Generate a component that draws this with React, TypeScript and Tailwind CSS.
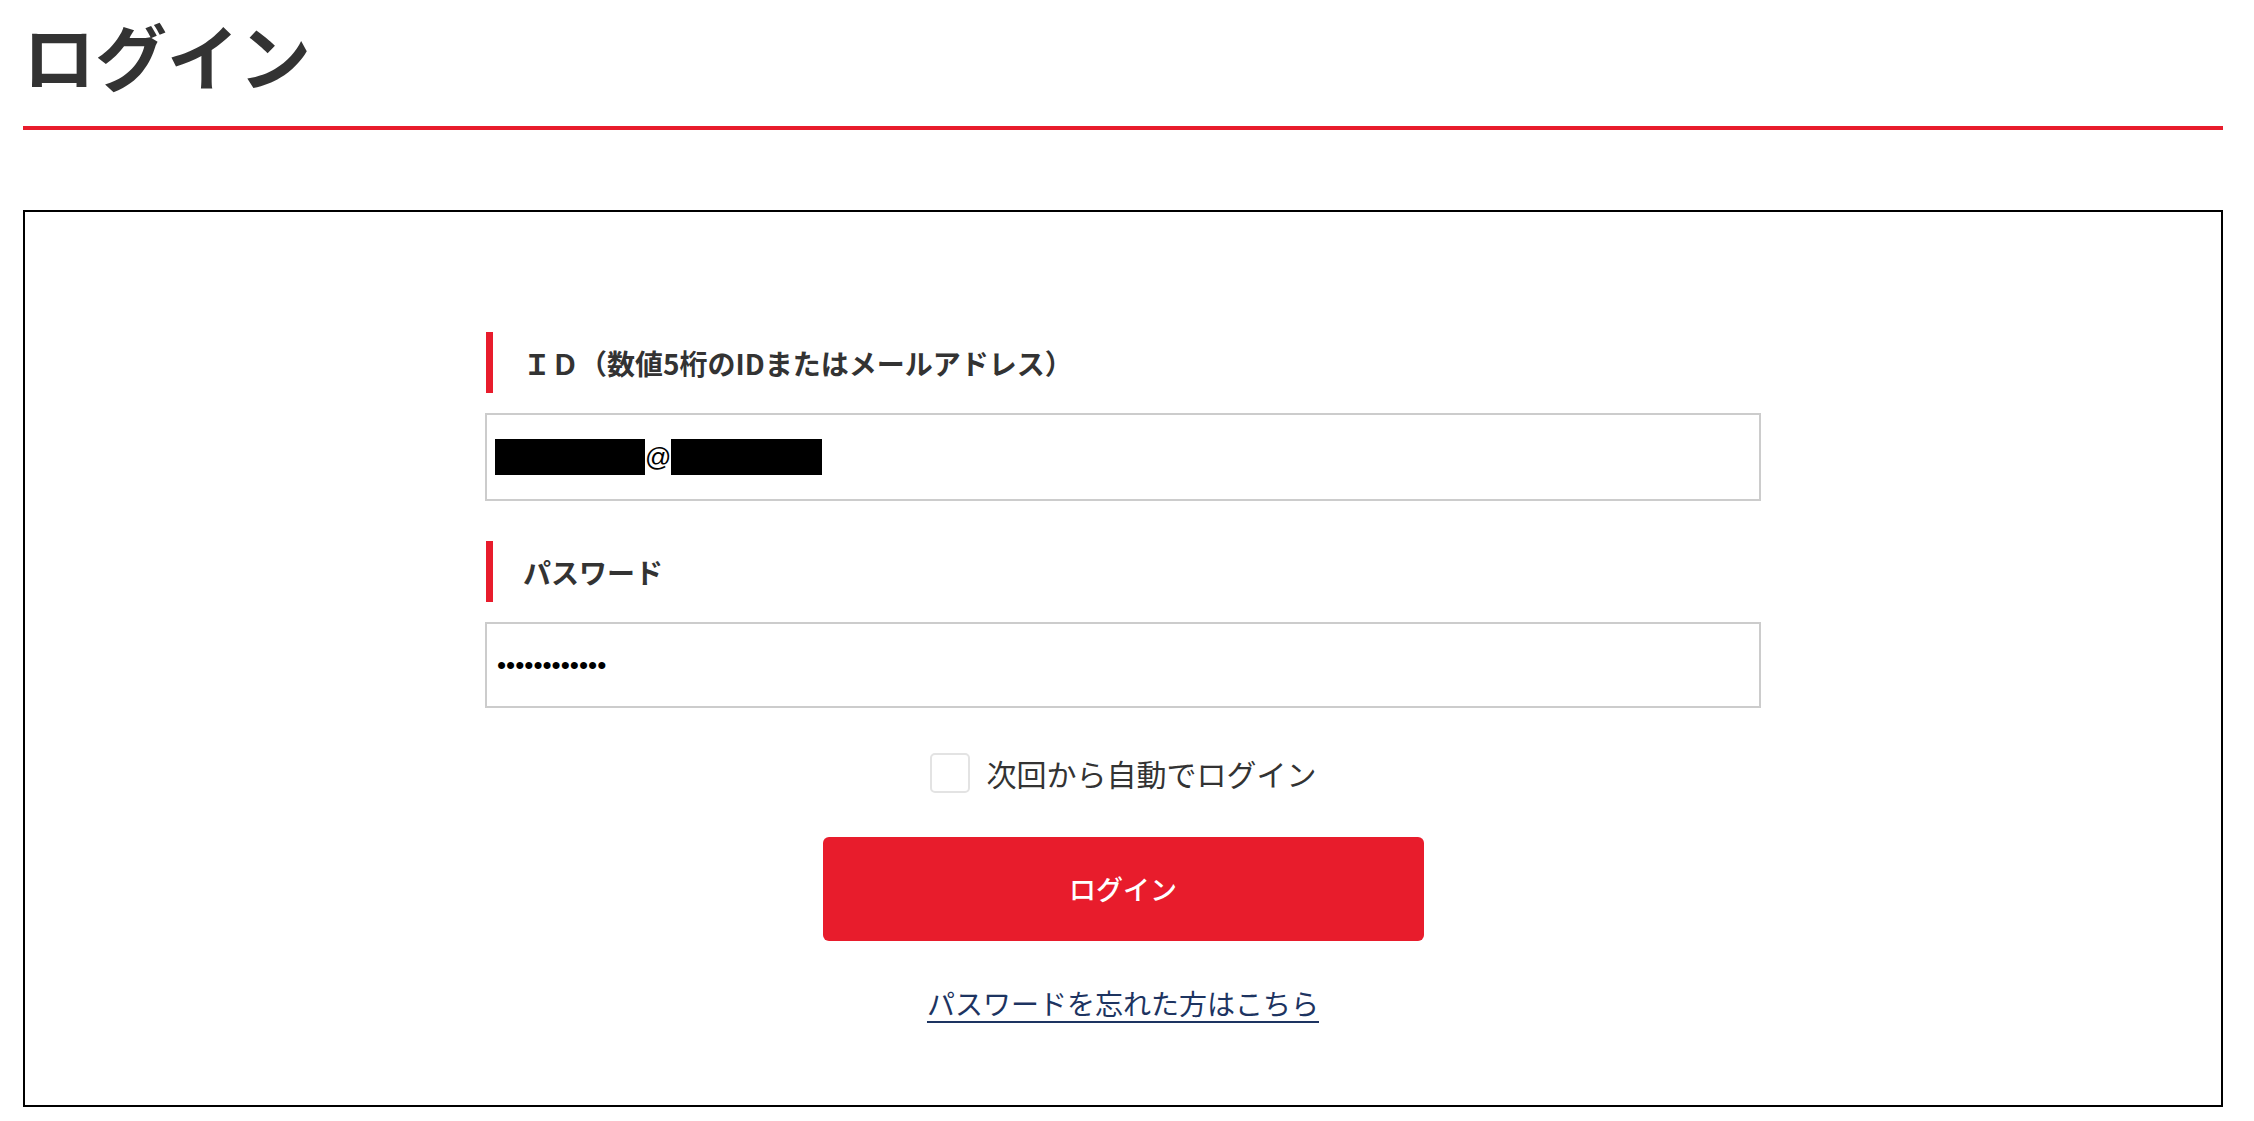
import React from "react";

export default function App() {
  return (
    <div className="min-h-screen bg-white pl-[23px] pr-[31px] font-['Noto_Sans_CJK_JP','Noto_Sans_CJK_SC',sans-serif] text-[#333]">
      <h1 className="pt-[18px] text-[72px] leading-[72px] font-bold text-[#333]">ログイン</h1>
      <div className="mt-[36px] h-[4px] bg-[#e81c2c]" />
      <div className="mt-[80px] border-2 border-black pt-[120px] pb-[82px]">
        <div className="mx-auto w-[1276px]">
          <div className="ml-[1px] flex h-[61px] items-center border-l-[7px] border-[#e81c2c] pl-[30px] text-[28px] font-bold leading-none text-[#333]">
            ＩＤ（数値5桁のIDまたはメールアドレス）
          </div>
          <div className="mt-[20px] flex h-[88px] items-center border-2 border-[#cccccc] pl-[8px]">
            <span className="inline-block h-[36px] w-[150px] bg-black" />
            <span className="font-['Liberation_Sans',sans-serif] text-[26px] leading-none text-black">@</span>
            <span className="inline-block h-[36px] w-[151px] bg-black" />
          </div>
          <div className="ml-[1px] mt-[40px] flex h-[61px] items-center border-l-[7px] border-[#e81c2c] pl-[30px] text-[28px] font-bold leading-none text-[#333]">
            パスワード
          </div>
          <div className="mt-[20px] flex h-[86px] items-center border-2 border-[#cccccc] pl-[10px]">
            <span className="font-['Liberation_Sans',sans-serif] text-[26px] leading-none text-black">
              ••••••••••••
            </span>
          </div>
          <div className="mt-[45px] flex h-[40px] items-center justify-center gap-[17px]">
            <span className="inline-block h-[40px] w-[40px] rounded-[5px] border-2 border-[#e3e3e3] bg-white" />
            <span className="text-[30px] leading-none text-[#333]">次回から自動でログイン</span>
          </div>
          <button
            type="button"
            className="mx-auto mt-[44px] flex h-[104px] w-[601px] items-center justify-center rounded-[6px] bg-[#e81c2c] text-[27px] font-medium text-white"
          >
            ログイン
          </button>
          <div className="mt-[42px] flex justify-center">
            <a
              href="#"
              className="text-[28px] leading-[40px] text-[#1d3461] underline decoration-2 underline-offset-[6px]"
            >
              パスワードを忘れた方はこちら
            </a>
          </div>
        </div>
      </div>
    </div>
  );
}
